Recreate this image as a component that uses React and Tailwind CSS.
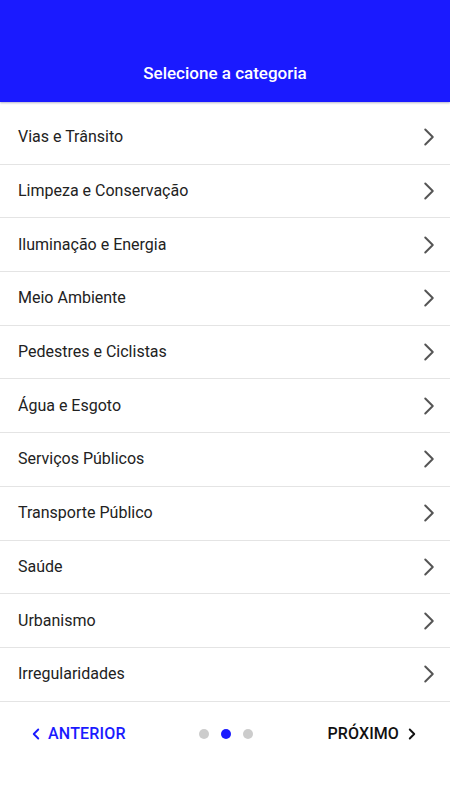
import { ChevronRight, ChevronLeft } from "lucide-react";

const categories = [
  "Vias e Trânsito",
  "Limpeza e Conservação",
  "Iluminação e Energia",
  "Meio Ambiente",
  "Pedestres e Ciclistas",
  "Água e Esgoto",
  "Serviços Públicos",
  "Transporte Público",
  "Saúde",
  "Urbanismo",
  "Irregularidades",
];

const App = () => {
  return (
    <div
      className="w-[450px] h-[800px] bg-white flex flex-col"
      style={{ fontFamily: "Roboto, 'Liberation Sans', sans-serif" }}
    >
      <div className="h-[102px] bg-[#1a1aff] flex items-end justify-center pb-[16px] shadow-[0_1px_2px_rgba(0,0,80,0.3)]">
        <h1 className="text-white text-[17px] font-medium">Selecione a categoria</h1>
      </div>

      <ul className="mt-[9px]">
        {categories.map((c) => (
          <li
            key={c}
            className="h-[53.7px] flex items-center justify-between pl-[18px] pr-[6px] border-b border-[#e4e4e4]"
          >
            <span className="text-[16px] text-[#222]">{c}</span>
            <ChevronRight size={30} strokeWidth={1.6} className="text-[#555]" />
          </li>
        ))}
      </ul>

      <div className="grid grid-cols-3 items-center mt-[20px] pl-[29px] pr-[29px] h-[24px]">
        <button className="flex items-center gap-[3px] text-[#1a1aff] text-[16px] font-medium tracking-[0.2px]">
          <ChevronLeft size={18} strokeWidth={2.5} className="-ml-[2px]" />
          ANTERIOR
        </button>
        <div className="flex items-center justify-center gap-[12px] pl-[2px]">
          <span className="w-[10px] h-[10px] rounded-full bg-[#cccccc]" />
          <span className="w-[10px] h-[10px] rounded-full bg-[#1a1aff]" />
          <span className="w-[10px] h-[10px] rounded-full bg-[#cccccc]" />
        </div>
        <button className="flex items-center justify-end gap-[4px] text-[#111] text-[16px] font-medium tracking-[0.1px]">
          PRÓXIMO
          <ChevronRight size={18} strokeWidth={2.5} />
        </button>
      </div>
    </div>
  );
};

export default App;
